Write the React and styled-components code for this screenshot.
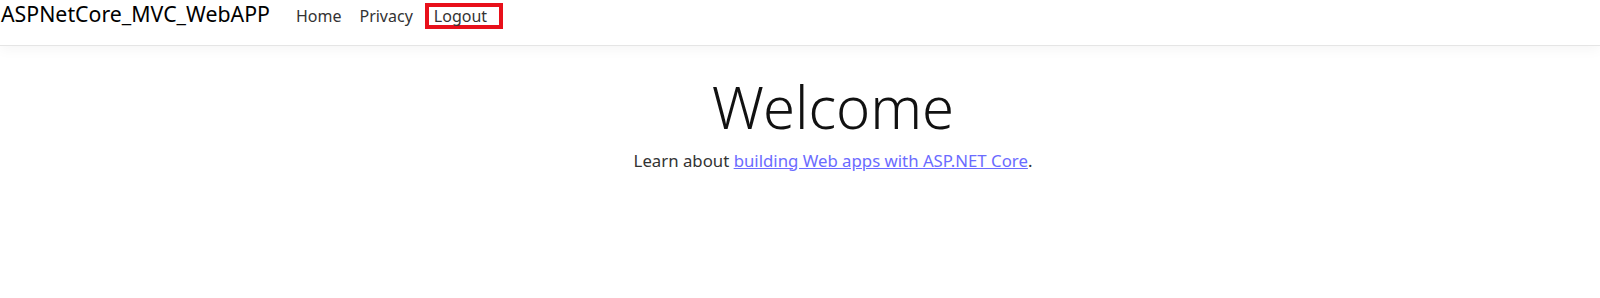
import React from "react";
import styled, { createGlobalStyle } from "styled-components";

const Global = createGlobalStyle`
  html, body { margin: 0; padding: 0; background: #fff; }
  body { font-family: "Noto Sans", "Open Sans", sans-serif; color: #212529; }
`;

const Header = styled.header`
  border-bottom: 1px solid #e5e5e5;
  box-shadow: 0 4px 12px rgba(0,0,0,0.04);
`;

const Nav = styled.nav`
  height: 45px;
  box-sizing: border-box;
  display: flex;
  align-items: baseline;
  padding-left: 1px;
`;

const Brand = styled.a`
  font-size: 21.3px;
  line-height: 28px;
  color: #000;
  text-decoration: none;
  margin-right: 17px;
`;

const NavLinks = styled.ul`
  display: flex;
  align-items: baseline;
  list-style: none;
  margin: 0;
  padding: 0;
`;

const NavItem = styled.li`
  padding: 0 9px;
  font-size: 16px;
  line-height: 28px;
  color: #333;
  ${p => p.$highlight && `
    border: 4px solid #e8101a;
    line-height: 18px;
    padding: 0 12px 0 5px;
    margin-left: 3px;
  `}
`;

const Main = styled.main`
  text-align: center;
  padding-top: 26px;
  padding-left: 66px;
`;

const Title = styled.h1`
  font-size: 58px;
  font-weight: 300;
  margin: 0;
  line-height: 1.2;
  color: #111;
`;

const Lead = styled.p`
  font-size: 16.8px;
  margin: 7px 0 0;
  color: #333;
`;

const Link = styled.a`
  color: #6b6bff;
  text-decoration: underline;
`;

export default function App() {
  return (
    <>
      <Global />
      <Header>
        <Nav>
          <Brand href="#">ASPNetCore_MVC_WebAPP</Brand>
          <NavLinks>
            <NavItem>Home</NavItem>
            <NavItem>Privacy</NavItem>
            <NavItem $highlight>Logout</NavItem>
          </NavLinks>
        </Nav>
      </Header>
      <Main>
        <Title>Welcome</Title>
        <Lead>
          Learn about <Link href="#">building Web apps with ASP.NET Core</Link>.
        </Lead>
      </Main>
    </>
  );
}
